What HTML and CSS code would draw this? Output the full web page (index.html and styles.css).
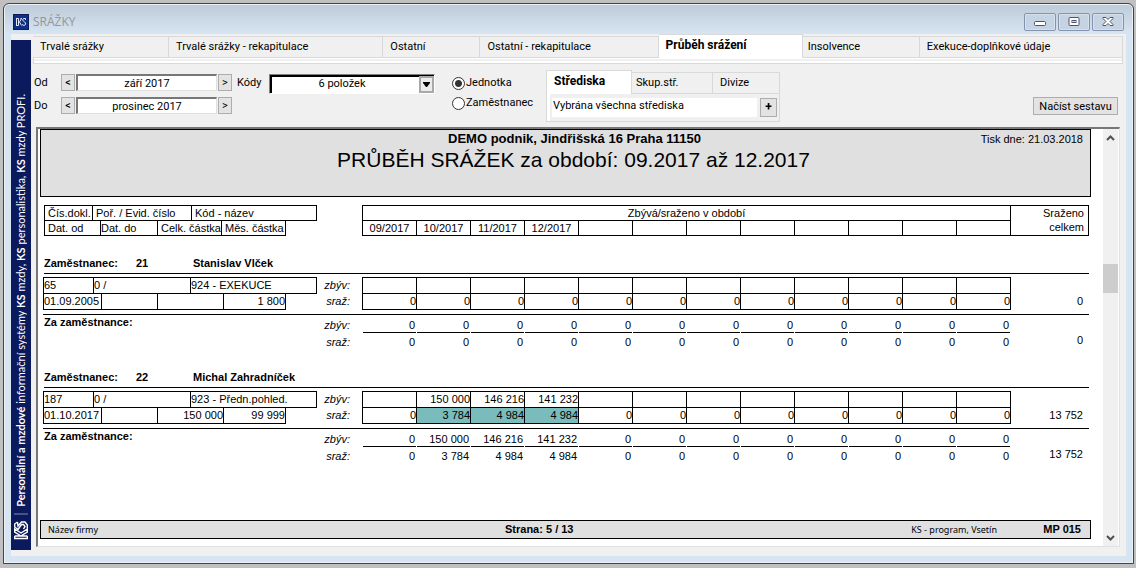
FILE: index.html
```html
<!DOCTYPE html>
<html lang="cs">
<head>
<meta charset="utf-8">
<title>SRÁŽKY</title>
<link rel="stylesheet" href="styles.css">
</head>
<body>
<div class="window">
  <header class="titlebar">
    <svg class="app-icon" viewBox="0 0 16 16" aria-hidden="true"><rect width="16" height="16" fill="#0f2f86"/><rect x=".5" y=".5" width="15" height="15" fill="none" stroke="#0a1c58"/><path d="M3 4.500h2.500M3 11.500h2.500M3.500 4.500v7M5.500 4.500v7M8.500 4.500 6.500 8l2 3.500M7.500 4.500H9M12.500 6V4.500h-2L9.500 6l3 3v1.500l-1.500 1L9 10.500" fill="none" stroke="#dfe6f5" stroke-width="1"/></svg>
    <h1 class="window-title">SRÁŽKY</h1>
    <div class="window-buttons">
      <button class="winbtn" aria-label="Minimalizovat"><svg width="12" height="12" viewBox="0 0 12 12"><rect x=".5" y="5.500" width="11" height="4" rx="1" fill="#fff" stroke="#4b5468"/></svg></button>
      <button class="winbtn" aria-label="Maximalizovat"><svg width="12" height="12" viewBox="0 0 12 12"><rect x="1" y="1.500" width="10" height="8" rx="1" fill="#fff" stroke="#4b5468"/><rect x="4" y="4.500" width="4" height="2" fill="#c8d5e3" stroke="#4b5468"/></svg></button>
      <button class="winbtn" aria-label="Zavřít"><svg width="12" height="12" viewBox="0 0 12 12"><path d="M1 1.500h3l2 2 2-2h3v1L8 5.500l3 3v1H8l-2-2-2 2H1v-1l3-3-3-3z" fill="#fff" stroke="#4b5468"/></svg></button>
    </div>
  </header>
  <div class="client">
    <aside class="brand">
      <svg class="brand-logo" viewBox="0 0 14 19" aria-hidden="true"><g transform="translate(0 19) rotate(-90)" fill="none" stroke="#fff" stroke-width="1.400"><path d="M.7 .7H4M.7 13.300H4M1.500 .7v12.600M4 .7v12.600M4 7 8 .7h3L7 7l4 6.300H8L4.500 7.500"/><path d="M18 3.500 16 .7h-3L10.500 4l5 3.500v2L13.500 11 11 9.500M18 3.500 14 4l4 3.500V11l-3 2.300h-3.500"/></g></svg>
      <span class="brand-rule"></span>
      <p class="brand-text"><b>Personální a mzdové</b> informační systémy <b>KS</b> mzdy, <b>KS</b> personalistika, <b>KS</b> mzdy PROFI.</p>
    </aside>
    <main class="main">
      <nav class="tabs" role="tablist">
        <button class="tab" role="tab">Trvalé srážky</button>
        <button class="tab" role="tab">Trvalé srážky - rekapitulace</button>
        <button class="tab" role="tab">Ostatní</button>
        <button class="tab" role="tab">Ostatní - rekapitulace</button>
        <button class="tab tab-active" role="tab" aria-selected="true">Průběh srážení</button>
        <button class="tab tab-near" role="tab">Insolvence</button>
        <button class="tab" role="tab">Exekuce-doplňkové údaje</button>
      </nav>
      <div class="tab-strip"></div>
      <form class="filters">
        <div class="period">
          <label for="from">Od</label>
          <button type="button" class="btn" aria-label="Předchozí měsíc od">&lt;</button>
          <input id="from" class="field" value="září 2017">
          <button type="button" class="btn" aria-label="Další měsíc od">&gt;</button>
          <label for="to">Do</label>
          <button type="button" class="btn" aria-label="Předchozí měsíc do">&lt;</button>
          <input id="to" class="field" value="prosinec 2017">
          <button type="button" class="btn" aria-label="Další měsíc do">&gt;</button>
        </div>
        <label class="codes-label" for="codes">Kódy</label>
        <div class="codes">
          <select id="codes" class="codes-select"><option>6 položek</option></select>
          <svg class="codes-arrow" width="15" height="17" viewBox="0 0 15 17" aria-hidden="true"><rect x="1" y="1" width="13" height="15" fill="#ececec" stroke="#a8a8a8" stroke-width="2"/><path d="M4 6h7v1L8 11H7L4 7z" fill="#000"/></svg>
        </div>
        <div class="radios">
          <label><input type="radio" name="scope" class="radio" checked>Jednotka</label>
          <label><input type="radio" name="scope" class="radio">Zaměstnanec</label>
        </div>
        <div class="centers">
          <div class="subtabs" role="tablist">
            <button type="button" class="subtab subtab-active" role="tab" aria-selected="true">Střediska</button>
            <button type="button" class="subtab" role="tab">Skup.stř.</button>
            <button type="button" class="subtab" role="tab">Divize</button>
          </div>
          <div class="subpanel">
            <input class="centers-input" aria-label="Střediska" value="Vybrána všechna střediska">
            <button type="button" class="btn btn-plus">+</button>
          </div>
        </div>
        <button type="button" class="btn btn-load">Načíst sestavu</button>
      </form>
      <section class="viewer">
        <article class="report">
          <header class="report-head">
            <p class="company">DEMO podnik, Jindřišská 16 Praha 11150</p>
            <h2 class="report-title">PRŮBĚH SRÁŽEK za období: 09.2017 až 12.2017</h2>
            <p class="printed">Tisk dne: 21.03.2018</p>
          </header>
          <div class="legend">
            <div class="info">
              <table class="box legend-a"><tr><td>Čís.dokl.</td><td>Poř. / Evid. číslo</td><td>Kód - název</td></tr></table>
              <table class="box legend-b"><tr><td>Dat. od</td><td>Dat. do</td><td>Celk. částka</td><td>Měs. částka</td></tr></table>
            </div>
            <table class="box months legend-months">
              <thead>
                <tr><th colspan="12">Zbývá/sraženo v období</th></tr>
                <tr><th>09/2017</th><th>10/2017</th><th>11/2017</th><th>12/2017</th><th></th><th></th><th></th><th></th><th></th><th></th><th></th><th></th></tr>
              </thead>
            </table>
            <div class="legend-total">Sraženo<br>celkem</div>
          </div>

          <section class="person">
            <h3 class="person-head"><span>Zaměstnanec:</span><span>21</span><span>Stanislav Vlček</span></h3>
            <div class="record">
              <div class="info">
                <table class="box row-a"><tr><td>65</td><td>0 /</td><td>924 - EXEKUCE</td></tr></table>
                <table class="box row-b"><tr><td>01.09.2005</td><td></td><td></td><td>1 800</td></tr></table>
              </div>
              <div class="marks"><span>zbýv:</span><span>sraž:</span></div>
              <table class="box months">
                <tr><td></td><td></td><td></td><td></td><td></td><td></td><td></td><td></td><td></td><td></td><td></td><td></td></tr>
                <tr><td>0</td><td>0</td><td>0</td><td>0</td><td>0</td><td>0</td><td>0</td><td>0</td><td>0</td><td>0</td><td>0</td><td>0</td></tr>
              </table>
              <div class="total">0</div>
            </div>
            <div class="summary">
              <div class="summary-label">Za zaměstnance:</div>
              <div class="marks"><span>zbýv:</span><span>sraž:</span></div>
              <table class="months sums">
                <tr><td>0</td><td>0</td><td>0</td><td>0</td><td>0</td><td>0</td><td>0</td><td>0</td><td>0</td><td>0</td><td>0</td><td>0</td></tr>
                <tr><td>0</td><td>0</td><td>0</td><td>0</td><td>0</td><td>0</td><td>0</td><td>0</td><td>0</td><td>0</td><td>0</td><td>0</td></tr>
              </table>
              <div class="total">0</div>
            </div>
          </section>

          <section class="person">
            <h3 class="person-head"><span>Zaměstnanec:</span><span>22</span><span>Michal Zahradníček</span></h3>
            <div class="record">
              <div class="info">
                <table class="box row-a"><tr><td>187</td><td>0 /</td><td>923 - Předn.pohled.</td></tr></table>
                <table class="box row-b"><tr><td>01.10.2017</td><td></td><td>150 000</td><td>99 999</td></tr></table>
              </div>
              <div class="marks"><span>zbýv:</span><span>sraž:</span></div>
              <table class="box months">
                <tr><td></td><td>150 000</td><td>146 216</td><td>141 232</td><td></td><td></td><td></td><td></td><td></td><td></td><td></td><td></td></tr>
                <tr><td>0</td><td class="hit">3 784</td><td class="hit">4 984</td><td class="hit">4 984</td><td>0</td><td>0</td><td>0</td><td>0</td><td>0</td><td>0</td><td>0</td><td>0</td></tr>
              </table>
              <div class="total">13 752</div>
            </div>
            <div class="summary">
              <div class="summary-label">Za zaměstnance:</div>
              <div class="marks"><span>zbýv:</span><span>sraž:</span></div>
              <table class="months sums">
                <tr><td>0</td><td>150 000</td><td>146 216</td><td>141 232</td><td>0</td><td>0</td><td>0</td><td>0</td><td>0</td><td>0</td><td>0</td><td>0</td></tr>
                <tr><td>0</td><td>3 784</td><td>4 984</td><td>4 984</td><td>0</td><td>0</td><td>0</td><td>0</td><td>0</td><td>0</td><td>0</td><td>0</td></tr>
              </table>
              <div class="total">13 752</div>
            </div>
          </section>

          <footer class="report-foot">
            <span class="foot-small">Název firmy</span>
            <b class="foot-page">Strana: 5 / 13</b>
            <span class="foot-small foot-vendor">KS - program, Vsetín</span>
            <b class="foot-code">MP 015</b>
          </footer>
        </article>
        <div class="scrollbar">
          <svg width="9" height="6" viewBox="0 0 9 6" aria-hidden="true"><path d="M1 5l3.500-3.500L8 5" fill="none" stroke="#505050" stroke-width="2"/></svg>
          <span class="thumb"></span>
          <svg width="9" height="6" viewBox="0 0 9 6" aria-hidden="true"><path d="M1 1l3.500 3.500L8 1" fill="none" stroke="#505050" stroke-width="2"/></svg>
        </div>
      </section>
    </main>
  </div>
</div>
</body>
</html>
```

FILE: styles.css
```css
* { box-sizing: border-box; }

body {
  margin: 0;
  height: 100vh;
  padding: 3px 2px 4px 3px;
  background: #c0c0c0;
  font: 11px/16px Roboto, "Liberation Sans", sans-serif;
  color: #000;
}

h1, h2, h3, p { margin: 0; font-weight: normal; }
button, input, select { font: inherit; color: inherit; margin: 0; border-radius: 0; }
button { padding: 0; }

.window {
  display: flex;
  flex-direction: column;
  height: 100%;
  padding: 0 7px 7px 7px;
  border: 1px solid #444;
  border-radius: 6px 6px 0 0;
  background: linear-gradient(#bdcbd9, #d7e4f2 30px);
  box-shadow: inset 0 0 0 1px #eaf1f8;
}

.titlebar {
  display: flex;
  align-items: center;
  height: 30px;
  padding: 6px 2px 0 2px;
}
.app-icon { width: 16px; height: 16px; }
.window-title {
  flex: 1;
  padding-left: 4px;
  font: 12px/16px "Open Sans", "Noto Sans", sans-serif;
  color: #969696;
}
.window-buttons { display: flex; gap: 2px; }
.winbtn {
  display: flex;
  align-items: center;
  justify-content: center;
  width: 32px;
  height: 18px;
  border: 1px solid #8493b0;
  border-radius: 2px;
  background: #c5d3e2;
  box-shadow: inset 0 0 0 1px #d6e1ec;
}

.client {
  display: flex;
  flex: 1;
  min-height: 0;
  background: #f0f0f0;
}

/* Vertical banner */
.brand {
  display: flex;
  flex-direction: column-reverse;
  align-items: center;
  width: 20px;
  margin: 6px 0;
  padding-bottom: 10px;
  background: #0a1a5c;
  color: #fff;
}
.brand-logo { flex: none; width: 14px; height: 19px; }
.brand-rule { flex: none; width: 14px; height: 2px; margin: 6px 0; background: #47528a; }
.brand-text {
  writing-mode: vertical-rl;
  transform: rotate(180deg);
  white-space: nowrap;
  font: 11px/18px Lato, "Open Sans", sans-serif;
}

.main {
  display: flex;
  flex: 1;
  flex-direction: column;
  min-width: 0;
  padding: 0 3px 9px 2px;
}

.tabs {
  display: grid;
  grid-template-columns: 136fr 214fr 97fr 178fr 144fr 117fr 203fr;
  align-items: end;
  height: 24px;
}
.tab {
  height: 22px;
  padding: 0 7px;
  border: 1px solid #d9d9d9;
  border-left-width: 0;
  background: #f0f0f0;
  text-align: left;
  white-space: nowrap;
}
.tab:first-child { border-left-color: transparent; }
.tab-near { padding-left: 5px; }
.tab-active {
  height: 24px;
  padding-bottom: 3px;
  border-bottom: 0;
  background: #fff;
  font-size: 12px;
  font-weight: bold;
}
.tab-strip {
  height: 6px;
  border: solid #d9d9d9;
  border-width: 0 1px 1px;
  background: linear-gradient(#fff 1px, #f0f0f0 1px, #f0f0f0 3px, #fff 3px);
}

.filters {
  display: flex;
  align-items: flex-start;
  height: 63px;
  padding: 6px 5px 0 1px;
}
.period {
  display: grid;
  grid-template-columns: 26px 14px 141px 14px;
  grid-auto-rows: 17px;
  gap: 6px 1px;
  padding-top: 4px;
}
.period label { line-height: 18px; }
.btn {
  border: 1px solid #adadad;
  background: #e3e3e3;
  line-height: 15px;
  text-align: center;
}
.field {
  width: 100%;
  height: 17px;
  padding: 0;
  border: 1px solid #e0e0e0;
  border-top: 2px solid #777;
  border-left: 2px solid #777;
  background: #fff;
  text-align: center;
}
.codes-label { padding: 5px 0 0 5px; width: 37px; }
.codes { position: relative; width: 166px; margin-top: 4px; }
.codes-select {
  display: block;
  width: 100%;
  height: 20px;
  padding: 0 20px 0 0;
  appearance: none;
  border: 1px solid #fff;
  border-top-color: #808080;
  border-left-color: #808080;
  background: #fff;
  box-shadow: inset 2px 2px 0 #000;
  text-align: center;
  text-align-last: center;
}
.codes-arrow { position: absolute; top: 2px; right: 1px; pointer-events: none; }

.radios { display: grid; grid-auto-rows: 20px; width: 111px; padding: 3px 0 0 17px; }
.radios label { display: flex; align-items: center; gap: 1px; }
.radio {
  flex: none;
  width: 13px;
  height: 13px;
  margin: 0;
  appearance: none;
  border: 1px solid #333;
  border-radius: 50%;
  background: #fff;
}
.radio:checked { background: radial-gradient(circle, #333 3px, #fff 4px); }

.centers { width: 234px; }
.subtabs { display: grid; grid-template-columns: 86px 81px 67px; align-items: end; height: 24px; }
.subtab {
  height: 22px;
  padding: 0 4px;
  border: 1px solid #d9d9d9;
  border-left: 0;
  background: #f0f0f0;
  text-align: left;
}
.subtab:last-child { padding-left: 7px; }
.subtab-active {
  height: 24px;
  padding: 0 7px 3px;
  border-left: 1px solid #d9d9d9;
  border-bottom: 0;
  background: #fff;
  font-size: 12px;
  font-weight: bold;
}
.subpanel {
  display: flex;
  gap: 3px;
  height: 28px;
  padding: 4px 2px 4px 5px;
  border: solid #d9d9d9;
  border-width: 0 1px 1px;
  background: linear-gradient(#fff, #fff) 0 0 / 3px 100% no-repeat, #f0f0f0;
}
.centers-input { flex: 1; min-width: 0; padding: 0 0 4px 1px; border: 0; background: #fff; }
.btn-plus { width: 17px; font-size: 12px; font-weight: bold; }
.btn-load { width: 85px; height: 18px; margin: 27px 0 0 auto; }

/* Report viewer */
.viewer {
  display: flex;
  flex: 1;
  min-height: 0;
  margin: 0 3px 0 3px;
  border: 1px solid #e0e0e0;
  border-top: 2px solid #777;
  border-left: 2px solid #777;
  background: #fff;
}
.report {
  display: flex;
  flex: 1;
  flex-direction: column;
  min-width: 0;
  padding: 0 12px 7px 2px;
  font: 11px/15px "Liberation Sans", Arial, sans-serif;
}
.report-head {
  display: grid;
  align-content: start;
  justify-items: center;
  height: 68px;
  padding: 1px 7px 0;
  border: 1px solid #000;
  background: #e0e0e0;
}
.company { grid-area: 1 / 1; padding-left: 18px; font-size: 13px; line-height: 16px; font-weight: bold; }
.report-title { padding-left: 16px; font-size: 21px; line-height: 26px; }
.printed { grid-area: 1 / 1; justify-self: end; line-height: 16px; }

.legend, .record, .summary {
  display: grid;
  grid-template-columns: 274px 45px 1fr 78px;
  margin: 0 2px 0 3px;
}
.legend { margin-top: 8px; }
.legend .info { padding-left: 1px; }
.legend-months { grid-column: 3; }
.legend-total {
  height: 31px;
  margin-left: -1px;
  padding: 0 4px;
  border: 1px solid #000;
  line-height: 14px;
  text-align: right;
}

table { border-collapse: collapse; table-layout: fixed; }
td, th { padding: 0; font-weight: normal; white-space: nowrap; }
.box td, .box th { border: 1px solid #000; }
.box + .box { margin-top: -1px; }
.legend td, .legend th { height: 15px; line-height: 14px; }
.record td { height: 16px; line-height: 15px; }

.legend-a { width: 273px; }
.legend-a td, .legend-b td { padding-left: 3px; }
.legend-a td:nth-child(1) { width: 48px; }
.legend-a td:nth-child(2) { width: 99px; }
.legend-b { width: 242px; }
.legend-b td:nth-child(1) { width: 56px; }
.legend-b td:nth-child(2) { width: 57px; padding-left: 0; }
.legend-b td:nth-child(3) { width: 64px; }
.row-a { width: 274px; }
.row-a td:nth-child(1) { width: 50px; }
.row-a td:nth-child(2) { width: 97px; }
.row-b { width: 243px; }
.row-b td:nth-child(1) { width: 58px; }
.row-b td:nth-child(2) { width: 56px; }
.row-b td:nth-child(3) { width: 66px; }
.row-b td:nth-child(n+3) { text-align: right; }

.months { width: 100%; }
.record .months td, .sums td { text-align: right; }
.hit { background: #7abcbc; }

.person { height: 114px; }
.person:first-of-type { margin-top: 13px; }
.person-head {
  display: grid;
  grid-template-columns: 92px 57px 1fr;
  height: 25px;
  margin: 0 2px 0 4px;
  padding-top: 7px;
  border-bottom: 1px solid #000;
  font-size: 11px;
  font-weight: bold;
}
.record { padding-top: 3px; }
.marks {
  display: grid;
  grid-auto-rows: 16px;
  grid-column: 2;
  padding-right: 12px;
  font-style: italic;
  line-height: 17px;
  text-align: right;
}
.total { padding-right: 6px; text-align: right; }
.record .total { padding-top: 17px; }
.summary { margin-top: 4px; border-top: 1px solid #000; }
.summary-label { font-weight: bold; padding-left: 1px; }
.summary .marks { grid-auto-rows: 17px; padding-top: 2px; }
.summary .total { padding-top: 18px; }
.sums { border-collapse: separate; border-spacing: 0; padding-right: 1px; }
.sums td { height: 18px; padding: 0 1px 0 0; line-height: 16px; }
.sums tr:first-child td {
  padding-top: 2px;
  background: linear-gradient(#000, #000) 1px 17px / 100% 1px no-repeat;
}

.report-foot {
  display: grid;
  grid-template-columns: 457px 1fr auto 84px;
  align-items: center;
  height: 19px;
  margin-top: auto;
  padding: 0 9px 0 7px;
  border: 1px solid #000;
  background: #e0e0e0;
}
.foot-small { font: 9px/16px "Noto Sans", "DejaVu Sans", sans-serif; }
.foot-code { text-align: right; }

.scrollbar {
  display: flex;
  flex-direction: column;
  align-items: center;
  width: 15px;
  margin-right: 1px;
  padding: 6px 0 5px;
  background: #f0f0f0;
}
.thumb { width: 100%; height: 29px; margin: 123px 0 auto; background: #cdcdcd; }
```
